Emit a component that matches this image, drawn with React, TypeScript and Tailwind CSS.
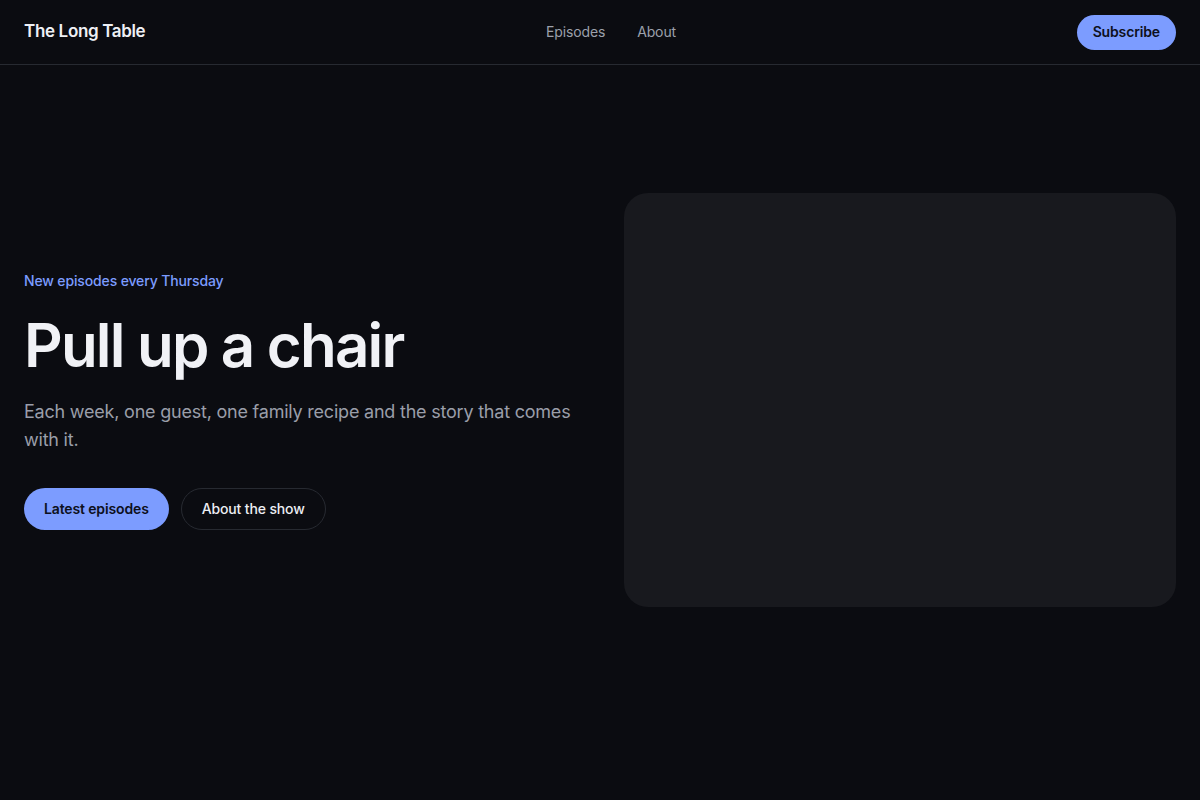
export default function App() {
  return (
    <div
      className="min-h-screen bg-[#0b0c11] text-[#eceef3]"
      style={{ fontFamily: "Inter, 'Noto Sans', sans-serif" }}
    >
      {/* top bar */}
      <header className="flex h-[65px] items-center justify-between border-b border-[#272a31] px-6">
        <div className="text-[17px] font-semibold tracking-[-0.02em] text-[#eef0f5]">
          The Long Table
        </div>
        <nav className="flex items-center gap-8 text-sm tracking-[-0.01em] text-[#9ca0ab]">
          <a href="#">Episodes</a>
          <a href="#">About</a>
        </nav>
        <button className="h-[35px] rounded-full bg-[#7c9cff] px-4 text-sm font-semibold tracking-[-0.01em] text-[#0d1020]">
          Subscribe
        </button>
      </header>

      {/* hero */}
      <main className="grid grid-cols-2 items-center gap-12 px-6 pt-32">
        <div>
          <p className="text-sm font-medium tracking-[-0.01em] text-[#7c9cff]">
            New episodes every Thursday
          </p>
          <h1 className="mt-[21px] text-[60px] font-semibold leading-[1.1] tracking-[-0.03em] text-[#f1f2f6]">
            Pull up a chair
          </h1>
          <p className="mt-5 text-lg leading-7 tracking-[-0.012em] text-[#9a9ea9]">
            Each week, one guest, one family recipe and the story that comes
            with it.
          </p>
          <div className="mt-[34px] flex gap-3">
            <button className="h-[42px] rounded-full bg-[#7c9cff] px-5 text-sm font-semibold tracking-[-0.01em] text-[#0d1020]">
              Latest episodes
            </button>
            <button className="h-[42px] rounded-full border border-[#272a31] px-5 text-sm font-medium tracking-[-0.01em] text-[#eceef3]">
              About the show
            </button>
          </div>
        </div>
        <div className="aspect-[4/3] rounded-3xl bg-[#18191e]" />
      </main>
    </div>
  );
}
